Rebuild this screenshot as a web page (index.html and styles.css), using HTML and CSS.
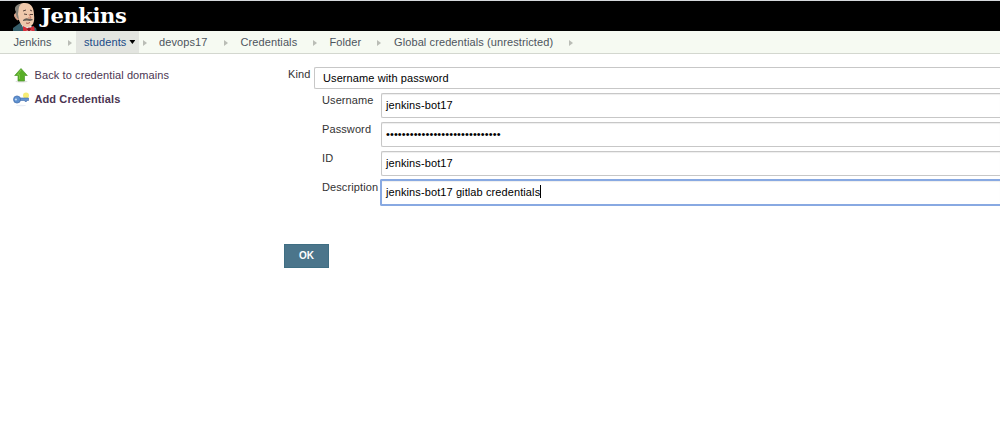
FILE: index.html
```html
<!DOCTYPE html>
<html lang="en">
<head>
<meta charset="utf-8">
<title>Add Credentials - Jenkins</title>
<link rel="stylesheet" href="styles.css">
</head>
<body>
<header class="header">
  <svg class="butler" width="25" height="31" viewBox="0 0 25 31">
    <path d="M0 30V26L7 21L19 24L23 26L24 30Z" fill="#355d69"/>
    <path d="M8 21L12 30H20L18 23Z" fill="#eee"/>
    <path d="M3 10C2 3 7 1 12 1C19 1 21 7 21 13C22 20 20 25 14 25C9 25 7 21 6 18C2 17 1 13 3 10Z" fill="#efc8ab"/>
    <path d="M3 10C0 5 4 2 8 2C5 5 6 8 5 12L6 18C3 16 3 13 3 10Z" fill="#85827a"/>
    <path d="M2 12Q1 14 3 16L5 18" fill="none" stroke="#d69c84" stroke-width="1.6"/>
    <path d="M10 9L13 8M17 8L19 9M11 12L14 12.5M17 12.5H20" stroke="#58453d" fill="none"/>
    <path d="M16 12L18 16L15 16" stroke="#c67e69" fill="none"/>
    <path d="M10 18Q13 15 16 17Q19 16 20 18L17 19Q14 18 10 19Z" fill="#665c54"/>
    <path d="M13 21Q15 22 17 20.5" stroke="#a35449" fill="none"/>
    <path d="M10 24L15 26.5L21 24L22 30L16 28L10 30Z" fill="#d52e39"/>
    <circle cx="16" cy="27.3" r="1.8" fill="#8f1823"/>
  </svg>
  <span class="brand">Jenkins</span>
</header>
<nav class="crumbs">
  <span class="crumb c-jenkins">Jenkins</span><i class="arrow"></i>
  <span class="crumb c-students"><span>students</span><i class="caret"></i></span><i class="arrow"></i>
  <span class="crumb c-devops">devops17</span><i class="arrow"></i>
  <span class="crumb c-cred">Credentials</span><i class="arrow"></i>
  <span class="crumb c-folder">Folder</span><i class="arrow"></i>
  <span class="crumb c-global">Global credentials (unrestricted)</span><i class="arrow"></i>
</nav>
<div class="page">
  <aside class="side">
    <a class="task">
      <svg width="16" height="16" viewBox="0 0 16 16"><ellipse cx="8" cy="14.5" rx="6" ry="1" fill="#e0e0df"/><path d="M7.5 1.5L13.8 8.5H11V14H4.5V8.5H1.2Z" fill="#58ae27" stroke="#4f9a2c" stroke-width=".7"/><path d="M7.5 3L4 7.7H6V12" fill="none" stroke="#7cc844"/></svg>
      <span class="back">Back to credential domains</span>
    </a>
    <a class="task">
      <svg width="17" height="16" viewBox="0 0 17 16"><ellipse cx="8" cy="14.5" rx="5" ry=".7" fill="#e9edf5"/><circle cx="13" cy="4.5" r="3" fill="#f6ec75"/><path d="M6 7H15.5V9.5H13.5V10.5H12V9.5H6Z" fill="#6394d3" stroke="#3d69a9" stroke-width=".6"/><ellipse cx="4" cy="8.5" rx="3.5" ry="3.6" fill="#5e91d0" stroke="#3d69a9" stroke-width=".7"/><ellipse cx="2.9" cy="8.5" rx="1.1" ry=".9" fill="#c8dbf3"/></svg>
      <span class="add">Add Credentials</span>
    </a>
  </aside>
  <main class="form">
    <div class="kind"><label class="kindlabel">Kind</label><div class="select"><span>Username with password</span></div></div>
    <div class="row"><label>Username</label><div class="field"><span>jenkins-bot17</span></div></div>
    <div class="row"><label>Password</label><div class="field"><span>•••••••••••••••••••••••••••••</span></div></div>
    <div class="row"><label>ID</label><div class="field"><span>jenkins-bot17</span></div></div>
    <div class="row"><label>Description</label><div class="field focused"><span>jenkins-bot17 gitlab credentials</span><i class="cursor"></i></div></div>
    <button class="ok">OK</button>
  </main>
</div>
</body>
</html>
```
FILE: styles.css
```css
* { box-sizing: border-box; }
body { margin: 0; height: 439px; overflow: hidden; background: #fff; color: #333; font: 11px/13px "Liberation Sans", Arial, sans-serif; letter-spacing: 0.1px; }
.header { display: flex; height: 31px; padding-left: 13px; background: #000; border-top: 1px solid #d5d8dc; overflow: hidden; }
.butler { flex: none; margin-top: 1px; }
.brand { margin: 2px 0 0 3px; color: #fff; font: bold 21px/26px "DejaVu Serif", Georgia, serif; letter-spacing: -0.4px; }
.crumbs { display: flex; height: 23px; padding-left: 13px; background: #f6faf2; border-bottom: 1px solid #d3d7cf; line-height: 23px; color: #4d545d; white-space: nowrap; }
.crumb { flex: none; }
.arrow { flex: none; width: 4px; height: 6px; margin-top: 9px; background: #babdb6; clip-path: polygon(0 0, 100% 50%, 0 100%); }
.c-jenkins { width: 55px; padding-left: 0.5px; }
.c-students { display: flex; width: 63px; margin: 0 4px; padding-left: 8px; background: #e3e5e0; color: #204a87; }
.caret { width: 6px; height: 4px; margin: 9px 0 0 3px; background: #000; clip-path: polygon(0 0, 100% 0, 50% 100%); }
.c-devops { width: 65px; margin-left: 12px; }
.c-cred { width: 73px; margin-left: 12px; padding-left: 0.5px; }
.c-folder { width: 48px; margin-left: 12px; padding-left: 0.5px; }
.c-global { width: 176px; margin-left: 12px; padding-left: 1px; }
.page { display: flex; }
.side { flex: none; width: 284px; padding: 13px 0 0 13px; }
.task { display: flex; height: 24px; color: #5c3566; white-space: nowrap; }
.task svg { flex: none; width: 17px; margin-right: 4.5px; }
.task span { line-height: 17px; color: #4b3652; }
.task .add { font-weight: bold; }
.form { flex: 1; min-width: 0; padding-top: 13px; }
.kind { display: flex; height: 22px; margin-bottom: 4px; }
.kindlabel { width: 30px; padding: 1px 0 0 4px; }
.select, .field { flex: 1; border: 1px solid #c7c7c7; border-right: 0; color: #000; white-space: nowrap; }
.select { padding-left: 8px; line-height: 21px; border-radius: 2px 0 0 2px; }
.row { display: flex; height: 25px; margin: 0 0 4px 38px; }
.row label { flex: none; width: 59px; padding-top: 1px; white-space: nowrap; }
.field { display: flex; padding-left: 4px; line-height: 23px; border-radius: 2px 0 0 2px; box-shadow: inset 0 1px 1px #eee; }
.focused { height: 27px; margin: -1px 0 0 -1px; border: 2px solid #88a9e2; border-right: 0; line-height: 22px; }
.cursor { width: 1px; height: 13px; margin-top: 4px; background: #000; }
.ok { display: block; width: 45px; height: 24px; margin-top: 39px; padding: 0; border: 1px solid #3f6e83; background: #4b758b; color: #fff; font: bold 10px/22px "Liberation Sans", Arial, sans-serif; }
```
